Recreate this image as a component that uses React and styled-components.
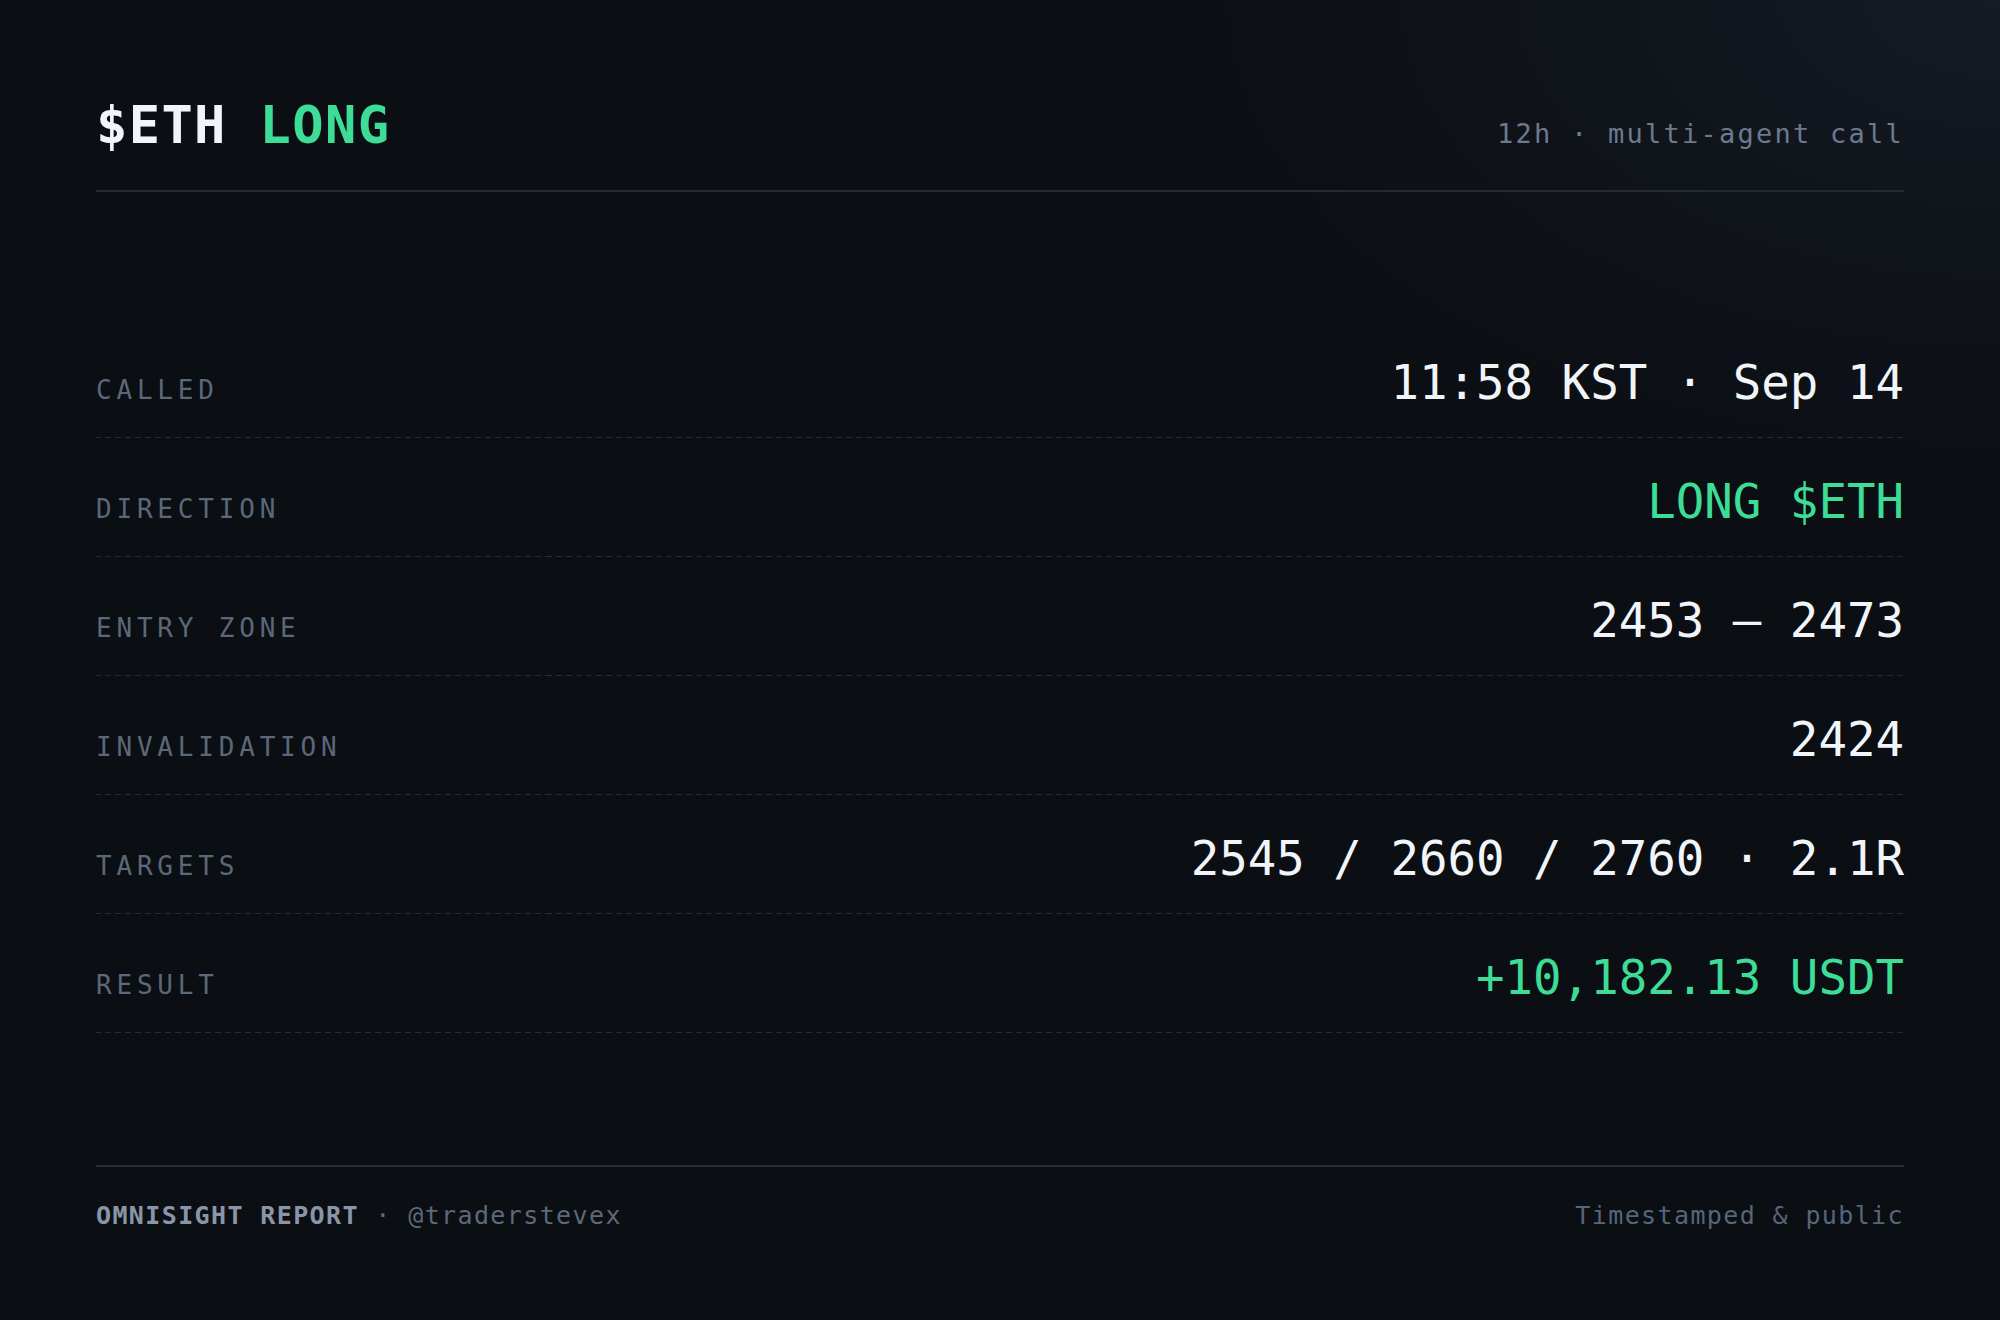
import React from "react";
import styled, { createGlobalStyle } from "styled-components";

const GlobalStyle = createGlobalStyle`
  html, body {
    margin: 0;
    padding: 0;
    background: #0b0e13;
  }
  * {
    box-sizing: border-box;
  }
`

const mono = `"DejaVu Sans Mono", "Liberation Mono", monospace`

const Page = styled.div`
  width: 2000px;
  height: 1320px;
  padding: 95px 96px 0;
  font-family: ${mono};
  background: radial-gradient(ellipse 900px 520px at 100% 0%, #151b24 0%, #10141b 45%, #0b0e13 100%);
  display: flex;
  flex-direction: column;
`

const Header = styled.header`
  display: flex;
  justify-content: space-between;
  align-items: baseline;
  padding-bottom: 35px;
  border-bottom: 2px solid #232a35;
`

const Title = styled.h1`
  margin: 0;
  font-size: 52px;
  line-height: 60px;
  font-weight: 700;
  letter-spacing: 1.4px;
  color: #f1f5f9;
`

const Accent = styled.span`
  color: #3ddc97;
`

const Meta = styled.div`
  font-size: 27px;
  line-height: 32px;
  letter-spacing: 2.25px;
  color: #6b7a8f;
`

const Rows = styled.div`
  margin-top: 127px;
  display: flex;
  flex-direction: column;
`

const Row = styled.div`
  display: flex;
  justify-content: space-between;
  align-items: baseline;
  padding: 36px 0 26px;
  border-bottom: 1px solid transparent;
  border-image: repeating-linear-gradient(90deg, #242c39 0 6px, transparent 6px 10px) 1;
`

const Label = styled.span`
  font-size: 26px;
  line-height: 32px;
  letter-spacing: 4.8px;
  color: #5b6879;
`

const Value = styled.span`
  font-size: 47.4px;
  line-height: 56px;
  color: ${p => (p.$green ? "#3ddc97" : "#f1f5f9")};
  white-space: pre;
`

const Footer = styled.footer`
  margin-top: 132px;
  padding-top: 34px;
  border-top: 2px solid #262e3a;
  display: flex;
  justify-content: space-between;
  align-items: baseline;
  font-size: 25px;
  line-height: 30px;
  letter-spacing: 1.38px;
`

const Brand = styled.span`
  color: #5d6878;

  b {
    font-weight: 700;
    color: #8a96a8;
  }
`

const Note = styled.span`
  color: #56657a;
`

const rows = [
    {label: "CALLED", value: "11:58 KST · Sep 14"},
    {label: "DIRECTION", value: "LONG $ETH", green: true},
    {label: "ENTRY ZONE", value: "2453 – 2473"},
    {label: "INVALIDATION", value: "2424"},
    {label: "TARGETS", value: "2545 / 2660 / 2760 · 2.1R"},
    {label: "RESULT", value: "+10,182.13 USDT", green: true},
]

const App = () => {
    return (
        <>
            <GlobalStyle/>
            <Page>
                <Header>
                    <Title>$ETH <Accent>LONG</Accent></Title>
                    <Meta>12h · multi-agent call</Meta>
                </Header>
                <Rows>
                    {rows.map(row => (
                        <Row key={row.label}>
                            <Label>{row.label}</Label>
                            <Value $green={row.green}>{row.value}</Value>
                        </Row>
                    ))}
                </Rows>
                <Footer>
                    <Brand><b>OMNISIGHT REPORT</b> · @traderstevex</Brand>
                    <Note>Timestamped &amp; public</Note>
                </Footer>
            </Page>
        </>
    );
};

export default App;
